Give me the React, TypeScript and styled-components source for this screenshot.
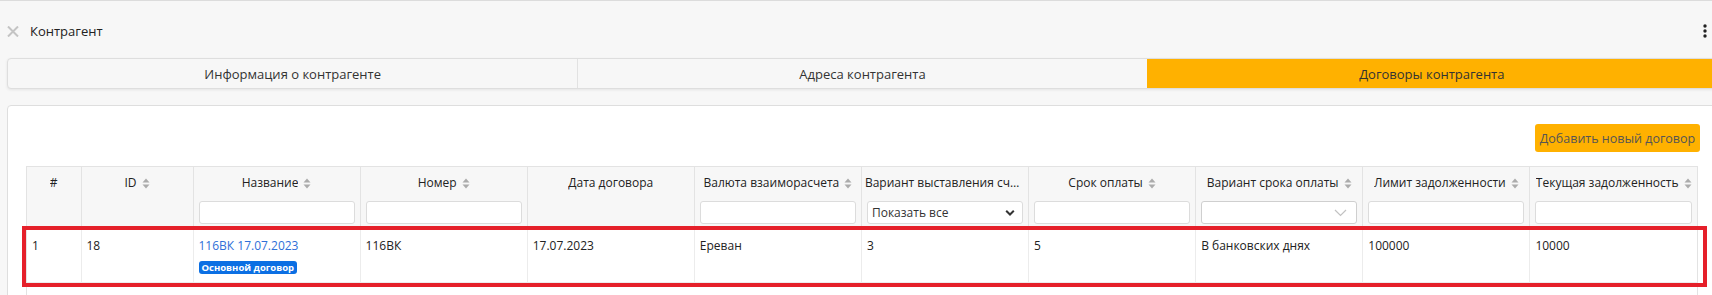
import React from 'react';
import styled, { createGlobalStyle } from 'styled-components';

const GlobalStyle = createGlobalStyle`
  html, body {
    margin: 0;
    padding: 0;
    background: #f7f7f7;
    overflow: hidden;
  }

  body {
    font-family: "Open Sans", "Liberation Sans", sans-serif;
    font-size: 13px;
    color: #212529;
  }
`;

const Page = styled.div`
  width: 1712px;
  height: 295px;
  overflow: hidden;
  border-top: 1px solid #dcdcdc;
  box-sizing: border-box;
`;

const TopBar = styled.div`
  display: flex;
  align-items: center;
  height: 57px;
  padding: 3px 5px 0 7px;
  box-sizing: border-box;
`;

const Title = styled.span`
  margin-left: 11px;
  font-size: 13px;
  color: #222;
`;

const Spacer = styled.div`
  flex: 1;
`;

const Content = styled.div`
  margin-left: 7px;
  width: 1710px;
`;

const Tabs = styled.div`
  display: grid;
  grid-template-columns: repeat(3, 1fr);
  height: 31px;
  border: 1px solid #dedede;
  border-radius: 4px;
  background: #f7f7f7;
  box-shadow: 0 1px 3px rgba(0, 0, 0, 0.08);
  box-sizing: border-box;
  overflow: hidden;
`;

const Tab = styled.div<{ $active?: boolean }>`
  display: flex;
  align-items: center;
  justify-content: center;
  color: #333;
  background: ${(p) => (p.$active ? '#ffb100' : 'transparent')};
  border-left: 1px solid ${(p) => (p.$active ? '#ffb100' : '#e2e2e2')};

  &:first-child {
    border-left: none;
  }
`;

const Panel = styled.div`
  margin-top: 16px;
  background: #fff;
  border: 1px solid #dedede;
  border-radius: 4px;
  padding: 18px 18px 0;
  font-size: 12px;
`;

const Toolbar = styled.div`
  display: flex;
  justify-content: flex-end;
  margin-bottom: 14px;
`;

const AddButton = styled.button`
  height: 28px;
  width: 165px;
  margin-right: -2px;
  padding: 0;
  border: none;
  border-radius: 3px;
  background: #ffb100;
  color: #555;
  font-family: "Open Sans", "Liberation Sans", sans-serif;
  font-size: 12.5px;
  cursor: pointer;
`;

const TableWrap = styled.div`
  position: relative;
  border: 1px solid #e3e3e3;
  border-bottom: none;
  padding-bottom: 40px;
`;

const Table = styled.table`
  width: 100%;
  table-layout: fixed;
  border-collapse: collapse;
`;

const Th = styled.th`
  background: #f7f7f7;
  border-left: 1px solid #e3e3e3;
  border-bottom: 1px solid #e3e3e3;
  padding: 7px 3px 3px;
  vertical-align: top;
  font-weight: 400;
  font-size: 12px;
  text-align: center;

  &:first-child {
    border-left: none;
  }
`;

const HeadTitle = styled.div`
  display: flex;
  align-items: center;
  justify-content: center;
  gap: 5px;
  height: 18px;
  line-height: 18px;
  white-space: nowrap;
  color: #222;
`;

const HeadText = styled.span`
  overflow: hidden;
  text-overflow: ellipsis;
  white-space: nowrap;
`;

const FilterCell = styled.div`
  position: relative;
  margin: 9px 2px 0;
  height: 23px;
`;

const FilterInput = styled.input`
  display: block;
  width: 100%;
  height: 23px;
  box-sizing: border-box;
  border: 1px solid #dcdcdc;
  border-radius: 3px;
  background: #fff;
  outline: none;
`;

const FilterSelect = styled.select<{ $soft?: boolean }>`
  display: block;
  width: 100%;
  height: 23px;
  box-sizing: border-box;
  border: 1px solid ${(p) => (p.$soft ? '#cfcfcf' : '#dcdcdc')};
  border-radius: 3px;
  background: #fff;
  appearance: none;
  padding: 0 4px;
  font-family: "Open Sans", "Liberation Sans", sans-serif;
  font-size: 12px;
  color: #333;
  outline: none;
`;

const Chevron = styled.svg<{ $right: number }>`
  position: absolute;
  right: ${(p) => p.$right}px;
  top: 50%;
  transform: translateY(-50%);
  pointer-events: none;
`;

const Td = styled.td`
  border-left: 1px solid #ececec;
  border-bottom: 1px solid #ececec;
  padding: 8px 5px;
  vertical-align: top;
  line-height: 20px;
  color: #222;

  &:first-child {
    border-left: none;
  }
`;

const Link = styled.a`
  color: #2f6fd8;
  text-decoration: none;
`;

const Badge = styled.span`
  display: inline-block;
  margin-top: 5px;
  height: 13px;
  line-height: 13px;
  padding: 0 3px;
  border-radius: 3px;
  background: #0b6fe3;
  color: #fff;
  font-size: 9.5px;
  font-weight: 700;
  vertical-align: top;
`;

const CellBody = styled.div`
  display: flex;
  flex-direction: column;
  align-items: flex-start;
`;

const Highlight = styled.div`
  position: absolute;
  left: -5px;
  top: 59px;
  width: 1685px;
  height: 61px;
  border: 4px solid #e5202a;
  box-sizing: border-box;
  pointer-events: none;
`;

const CloseIcon = () => (
  <svg width="12" height="11" viewBox="0 0 12 11">
    <path d="M1 0.5 L11 10.5 M11 0.5 L1 10.5" stroke="#c4c4c4" strokeWidth="2" />
  </svg>
);

const Kebab = () => (
  <svg width="4" height="14" viewBox="0 0 4 14">
    <circle cx="2" cy="2" r="1.7" fill="#222" />
    <circle cx="2" cy="7" r="1.7" fill="#222" />
    <circle cx="2" cy="12" r="1.7" fill="#222" />
  </svg>
);

const SortIcon = () => (
  <svg width="8" height="11" viewBox="0 0 8 11" style={{ flexShrink: 0 }}>
    <path d="M0.5 4.6 L4 0.6 L7.5 4.6 Z" fill="#acacac" />
    <path d="M0.5 6.4 L7.5 6.4 L4 10.4 Z" fill="#acacac" />
  </svg>
);

type Filter = 'input' | 'select' | 'soft-select' | null;

type Column = {
  title: string;
  sortable: boolean;
  filter: Filter;
  width?: number;
};

const columns: Column[] = [
  { title: '#', sortable: false, filter: null, width: 54 },
  { title: 'ID', sortable: true, filter: null, width: 112 },
  { title: 'Название', sortable: true, filter: 'input' },
  { title: 'Номер', sortable: true, filter: 'input' },
  { title: 'Дата договора', sortable: false, filter: null },
  { title: 'Валюта взаиморасчета', sortable: true, filter: 'input' },
  { title: 'Вариант выставления счета', sortable: false, filter: 'select' },
  { title: 'Срок оплаты', sortable: true, filter: 'input' },
  { title: 'Вариант срока оплаты', sortable: true, filter: 'soft-select' },
  { title: 'Лимит задолженности', sortable: true, filter: 'input' },
  { title: 'Текущая задолженность', sortable: true, filter: 'input' },
];

const renderFilter = (filter: Filter) => {
  switch (filter) {
    case 'input':
      return (
        <FilterCell>
          <FilterInput type="text" />
        </FilterCell>
      );

    case 'select':
      return (
        <FilterCell>
          <FilterSelect defaultValue="all">
            <option value="all">Показать все</option>
          </FilterSelect>
          <Chevron $right={8} width="10" height="7" viewBox="0 0 10 7">
            <path d="M1.2 1.3 L5 5 L8.8 1.3" stroke="#333" strokeWidth="2" fill="none" />
          </Chevron>
        </FilterCell>
      );

    case 'soft-select':
      return (
        <FilterCell>
          <FilterSelect $soft defaultValue="">
            <option value="" />
          </FilterSelect>
          <Chevron $right={10} width="13" height="8" viewBox="0 0 13 8">
            <path d="M1 1 L6.5 6.5 L12 1" stroke="#c2c2c2" strokeWidth="1.2" fill="none" />
          </Chevron>
        </FilterCell>
      );

    default:
      return null;
  }
};

const App = () => (
  <>
    <GlobalStyle />
    <Page>
      <TopBar>
        <CloseIcon />
        <Title>Контрагент</Title>
        <Spacer />
        <Kebab />
      </TopBar>
      <Content>
        <Tabs>
          <Tab>Информация о контрагенте</Tab>
          <Tab>Адреса контрагента</Tab>
          <Tab $active>Договоры контрагента</Tab>
        </Tabs>
        <Panel>
          <Toolbar>
            <AddButton type="button">Добавить новый договор</AddButton>
          </Toolbar>
          <TableWrap>
            <Table>
              <colgroup>
                {columns.map((col) => (
                  <col key={col.title} style={col.width ? { width: col.width } : undefined} />
                ))}
              </colgroup>
              <thead>
                <tr>
                  {columns.map((col) => (
                    <Th key={col.title}>
                      <HeadTitle>
                        <HeadText>{col.title}</HeadText>
                        {col.sortable && <SortIcon />}
                      </HeadTitle>
                      {renderFilter(col.filter)}
                    </Th>
                  ))}
                </tr>
              </thead>
              <tbody>
                <tr>
                  <Td>1</Td>
                  <Td>18</Td>
                  <Td>
                    <CellBody>
                      <Link href="#">116ВК 17.07.2023</Link>
                      <Badge>Основной договор</Badge>
                    </CellBody>
                  </Td>
                  <Td>116ВК</Td>
                  <Td>17.07.2023</Td>
                  <Td>Ереван</Td>
                  <Td>3</Td>
                  <Td>5</Td>
                  <Td>В банковских днях</Td>
                  <Td>100000</Td>
                  <Td>10000</Td>
                </tr>
              </tbody>
            </Table>
            <Highlight />
          </TableWrap>
        </Panel>
      </Content>
    </Page>
  </>
);

export default App;
